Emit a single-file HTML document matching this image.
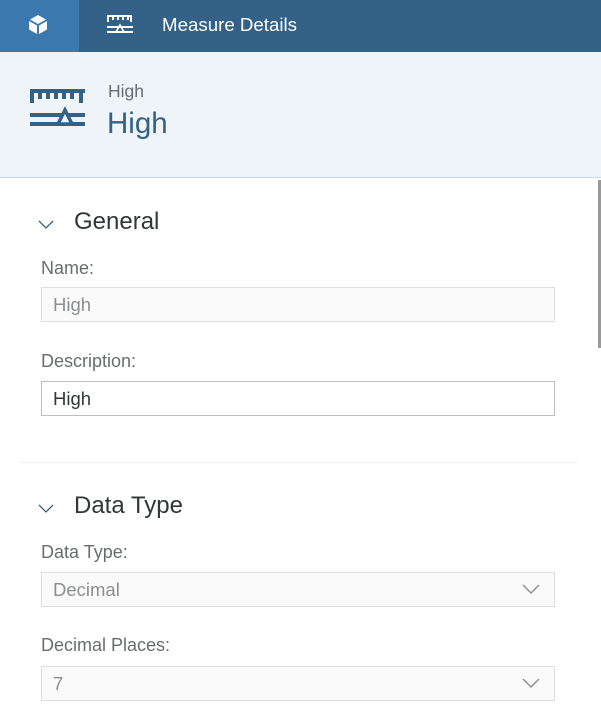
<!DOCTYPE html>
<html><head><meta charset="utf-8"><style>
*{box-sizing:border-box;margin:0;padding:0}
body{width:601px;height:728px;overflow:hidden;background:#fff;font-family:"Liberation Sans",sans-serif;position:relative}
.top{position:absolute;left:0;top:0;width:601px;height:52px;background:#346187}
.home{position:absolute;left:0;top:0;width:79px;height:52px;background:#3b78ae}
.title{position:absolute;left:162px;top:14px;color:#fff;font-size:18.7px}
.hdr{position:absolute;left:0;top:52px;width:601px;height:126px;background:#eff4f9;border-bottom:1px solid #c3d7ea}
.sub{position:absolute;left:108px;top:81px;font-size:17.5px;color:#6a6d70}
.big{position:absolute;left:107px;top:107px;font-size:29.5px;color:#346187}
.sec{position:absolute;left:74px;font-size:24px;color:#32363a}
.chev{position:absolute;left:38px}
.lbl{position:absolute;left:41px;font-size:18px;color:#6a6d70}
.inp{position:absolute;left:41px;width:514px;height:35px;border:1px solid #dedede;background:#fafafa;font-size:18.5px;color:#8c8e90;padding:6px 11px}
.inp.e{border-color:#bfbfbf;background:#fff;color:#32363a}
.sep{position:absolute;left:20px;top:462px;width:557px;height:1px;background:#eee}
.sb{position:absolute;left:598px;top:180px;width:3px;height:168px;background:#9a9a9a}
</style></head><body>
<div class="top"></div>
<div class="home"><svg width="79" height="52" viewBox="0 0 79 52"><g fill="#fff"><polygon points="38,15 46,19.5 38,24 30,19.5"/><polygon points="29,21 37,25.5 37,34 29,29.5"/><polygon points="47,21 39,25.5 39,34 47,29.5"/></g></svg></div>
<svg style="position:absolute;left:104px;top:12px" width="32" height="26" viewBox="0 0 32 26"><g fill="#fff"><rect x="3" y="3" width="25" height="2"/><rect x="3" y="3" width="2" height="7"/><rect x="8" y="3" width="2" height="5"/><rect x="13" y="3" width="2" height="5"/><rect x="18" y="3" width="2" height="5"/><rect x="23" y="3" width="2" height="5"/><rect x="26" y="3" width="2" height="7"/><rect x="3" y="14" width="26" height="2"/><rect x="3" y="19" width="26" height="2"/></g><polygon points="16,13 20,20 12,20" fill="none" stroke="#fff" stroke-width="1.6"/></svg>
<div class="title">Measure Details</div>
<div class="hdr"></div>
<svg style="position:absolute;left:28px;top:86px" width="58" height="46" viewBox="0 0 58 46"><g fill="#346187"><rect x="2" y="3" width="55" height="4"/><rect x="2" y="3" width="4" height="14"/><rect x="10" y="3" width="4" height="10"/><rect x="18" y="3" width="4" height="10"/><rect x="26" y="3" width="4" height="10"/><rect x="34" y="3" width="4" height="10"/><rect x="42" y="3" width="4" height="10"/><rect x="51" y="3" width="4" height="14"/><rect x="2" y="27" width="55" height="4"/><rect x="2" y="36" width="55" height="4"/></g><polygon points="37,24 44,38 30,38" fill="#eff4f9" stroke="#346187" stroke-width="3.5"/></svg>
<div class="sub">High</div>
<div class="big">High</div>
<svg class="chev" style="top:219px" width="16" height="12"><polyline points="1,2 8,9 15,2" fill="none" stroke="#346187" stroke-width="1.3"/></svg>
<div class="sec" style="top:208px">General</div>
<div class="lbl" style="top:258px">Name:</div>
<div class="inp" style="top:287px">High</div>
<div class="lbl" style="top:351px">Description:</div>
<div class="inp e" style="top:381px">High</div>
<div class="sep"></div>
<svg class="chev" style="top:503px" width="16" height="12"><polyline points="1,2 8,9 15,2" fill="none" stroke="#346187" stroke-width="1.3"/></svg>
<div class="sec" style="top:492px">Data Type</div>
<div class="lbl" style="top:542px">Data Type:</div>
<div class="inp" style="top:572px">Decimal</div>
<svg style="position:absolute;left:522px;top:584px" width="18" height="11"><polyline points="1,1 9,9 17,1" fill="none" stroke="#8c8e90" stroke-width="1.4"/></svg>
<div class="lbl" style="top:635px">Decimal Places:</div>
<div class="inp" style="top:666px">7</div>
<svg style="position:absolute;left:522px;top:678px" width="18" height="11"><polyline points="1,1 9,9 17,1" fill="none" stroke="#8c8e90" stroke-width="1.4"/></svg>
<div class="sb"></div>
</body></html>
